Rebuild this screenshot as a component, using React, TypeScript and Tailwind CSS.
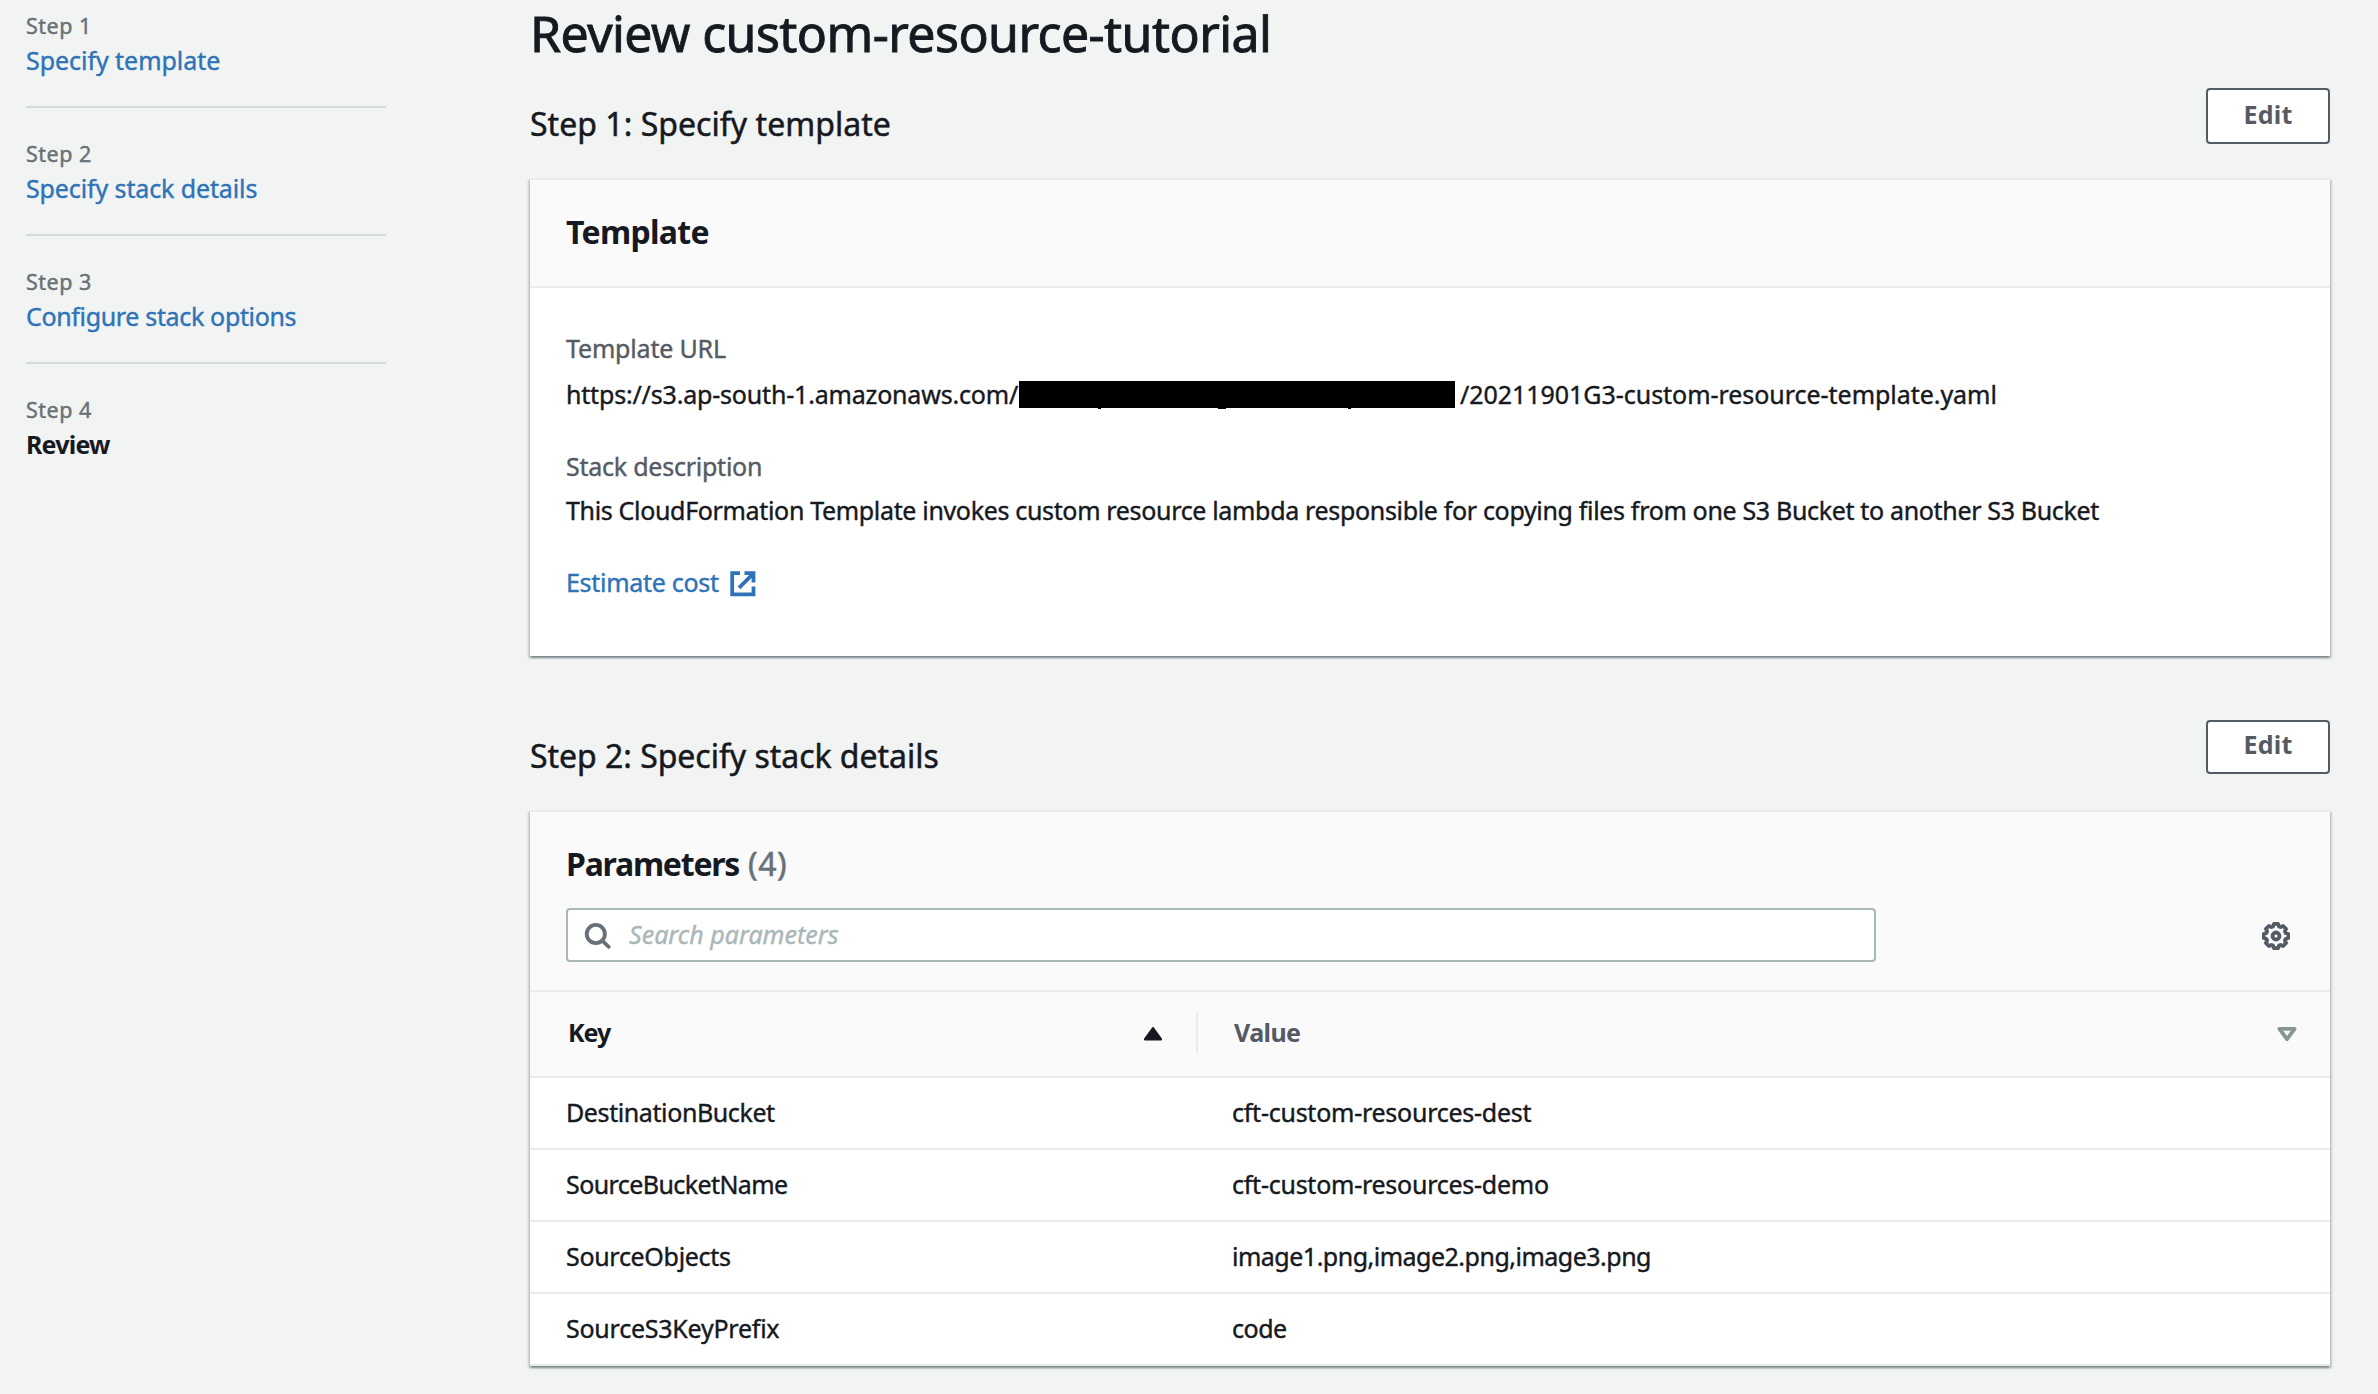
import type { ReactNode } from "react";

const steps = [
  { label: "Step 1", title: "Specify template", tracking: "tracking-[-0.05px]" },
  { label: "Step 2", title: "Specify stack details", tracking: "tracking-[-0.12px]" },
  { label: "Step 3", title: "Configure stack options", tracking: "tracking-[-0.34px]" },
  { label: "Step 4", title: "Review", tracking: "tracking-[-0.8px]", current: true },
];

const parameters = [
  { key: "DestinationBucket", value: "cft-custom-resources-dest", k: "tracking-[-0.4px]", v: "tracking-[-0.25px]" },
  { key: "SourceBucketName", value: "cft-custom-resources-demo", k: "tracking-[-0.58px]", v: "tracking-[-0.25px]" },
  { key: "SourceObjects", value: "image1.png,image2.png,image3.png", k: "tracking-[-0.31px]", v: "tracking-[-0.5px]" },
  { key: "SourceS3KeyPrefix", value: "code", k: "tracking-[-0.24px]", v: "tracking-[-0.5px]" },
];

function StepNav() {
  return (
    <nav className="ml-[26px] mt-[10px] w-[360px] shrink-0">
      {steps.map((s) => (
        <div key={s.label} className="mb-[30px] border-b-2 border-[#d5dbdb] pb-[28px] last:border-0">
          <div className="text-[21.5px] leading-[32px] tracking-[0.5px] text-[#687078]">{s.label}</div>
          <div
            className={`leading-[36px] ${s.tracking} ${s.current ? "font-bold text-[#16191f] [-webkit-text-stroke:0px]" : "text-[#2e73b8]"}`}
          >
            {s.title}
          </div>
        </div>
      ))}
    </nav>
  );
}

function SectionHeader({ children, short }: { children: ReactNode; short?: boolean }) {
  return (
    <div className="mb-[34px] flex h-[56px] items-start justify-between">
      {children}
      <button
        className={`w-[124px] rounded-[4px] border-2 border-[#545b64] bg-white text-center font-bold tracking-[0.17px] text-[#545b64] [-webkit-text-stroke:0px] ${short ? "h-[54px] pb-[5px]" : "h-[56px] pb-[3px]"}`}
      >
        Edit
      </button>
    </div>
  );
}

function Card({ children }: { children: ReactNode }) {
  return (
    <section className="border-t-2 border-[#eaebeb] bg-white shadow-[0_2px_2px_0_rgba(0,28,36,0.3),2px_2px_2px_0_rgba(0,28,36,0.15),-2px_2px_2px_0_rgba(0,28,36,0.15)]">
      {children}
    </section>
  );
}

function ExternalIcon() {
  return (
    <svg className="ml-[11px] mt-[3px] h-[26px] w-[26px]" viewBox="0 0 26 26" fill="none" stroke="currentColor" strokeWidth="3.8">
      <path d="M10 2.2H2.2V23.3H23.5V15.5M14.5 2.2H23.5V11.5M23 2.9L9 16.8" />
    </svg>
  );
}

function SearchIcon() {
  return (
    <svg className="ml-[16px] mt-[2px] h-[28px] w-[28px] text-[#687078]" viewBox="0 0 28 28" fill="none" stroke="currentColor" strokeWidth="3.8">
      <circle cx="11.8" cy="12" r="9.1" />
      <path d="M18 18.3L25.8 26" />
    </svg>
  );
}

function GearIcon() {
  return (
    <svg
      className="mt-[2px] h-[28px] w-[28px] text-[#545b64]"
      viewBox="0 0 28 28"
      fill="none"
      stroke="currentColor"
      strokeWidth="3.8"
      strokeLinejoin="round"
    >
      <path d="M12.1 1.8h3.8l1 2.6 1.7.7 2.5-1.1 2.9 2.9-1.1 2.5.7 1.7 2.6 1v3.8l-2.6 1-.7 1.7 1.1 2.5-2.9 2.9-2.5-1.1-1.7.7-1 2.6h-3.8l-1-2.6-1.7-.7-2.5 1.1L4 21.1l1.1-2.5-.7-1.7-2.6-1v-3.8l2.6-1 .7-1.7L4 6.9 6.9 4l2.5 1.1 1.700-.7z" />
      <circle cx="14" cy="14" r="3.5" />
    </svg>
  );
}

export default function App() {
  return (
    <div className="flex h-[1394px] w-full overflow-hidden bg-[#f2f4f3] font-['Noto_Sans','Open_Sans',sans-serif] text-[25px] whitespace-nowrap text-[#16191f] [-webkit-text-stroke:0.4px]">
      <StepNav />
      <main className="ml-[144px] mt-[3px] w-[1800px] shrink-0">
        <h1 className="mb-[25px] text-[50px] leading-[60px] tracking-[-0.56px] [-webkit-text-stroke:0.9px]">
          Review custom-resource-tutorial
        </h1>

        <SectionHeader>
          <h2 className="self-end text-[32px] leading-[40px] tracking-[0.04px] [-webkit-text-stroke:0.5px]">Step 1: Specify template</h2>
        </SectionHeader>
        <Card>
          <div className="h-[108px] border-b-2 border-[#eaebeb] bg-[#fafafa] px-[36px] pt-[32px]">
            <h3 className="text-[32px] font-bold leading-[40px] tracking-[-0.69px] [-webkit-text-stroke:0px]">Template</h3>
          </div>
          <div className="h-[368px] px-[36px] pt-[40px] leading-[40px]">
            <div className="tracking-[-0.18px] text-[#545b64]">Template URL</div>
            <div className="mt-[6px] flex">
              <span className="w-[452.5px] tracking-[-0.18px]">https://s3.ap-south-1.amazonaws.com/</span>
              <span className="relative mr-[5px] mt-[7px] h-[27px] w-[436.5px] bg-black">
                <span className="absolute left-[79px] top-[27px] h-px w-[3px] bg-black" />
                <span className="absolute left-[199px] top-[27px] h-px w-[8px] bg-black" />
                <span className="absolute left-[329px] top-[27px] h-px w-[3px] bg-black" />
              </span>
              <span className="tracking-[-0.04px]">/20211901G3-custom-resource-template.yaml</span>
            </div>
            <div className="mt-[32px] tracking-[-0.24px] text-[#545b64]">Stack description</div>
            <div className="mt-[4px] tracking-[-0.334px]">
              This CloudFormation Template invokes custom resource lambda responsible for copying files from one S3 Bucket to another S3 Bucket
            </div>
            <a className="mt-[32px] flex h-[40px] items-center tracking-[-0.3px] text-[#2e73b8]">
              Estimate cost
              <ExternalIcon />
            </a>
          </div>
        </Card>

        <div className="h-[64px]" />
        <SectionHeader short>
          <h2 className="self-end text-[32px] leading-[40px] tracking-[-0.03px] [-webkit-text-stroke:0.5px]">Step 2: Specify stack details</h2>
        </SectionHeader>
        <Card>
          <div className="h-[180px] border-b-2 border-[#eaebeb] bg-[#fafafa] px-[36px] pt-[32px]">
            <h3 className="flex text-[32px] font-bold leading-[40px] tracking-[-1.24px] [-webkit-text-stroke:0px]">
              <span className="w-[182px]">Parameters</span>
              <span className="font-normal tracking-[0.6px] text-[#687078] [-webkit-text-stroke:0.5px]">(4)</span>
            </h3>
            <div className="mt-[24px] flex items-center justify-between">
              <div className="flex h-[54px] w-[1310px] items-center rounded-[4px] border-2 border-[#aab7b8] bg-white">
                <SearchIcon />
                <span className="ml-[17px] italic tracking-[0.02px] text-[#aab7b8]">Search parameters</span>
              </div>
              <div className="mr-[4px]">
                <GearIcon />
              </div>
            </div>
          </div>
          <div className="flex h-[86px] border-b-2 border-[#eaebeb] bg-[#fafafa] font-bold leading-[81px] [-webkit-text-stroke:0px]">
            <div className="flex w-[666px] justify-between pl-[38px] pr-[33px]">
              <span className="tracking-[-1px]">Key</span>
              <svg className="mt-[34px] h-[15px] w-[20px]" viewBox="0 0 20 15">
                <path d="M10 2.4L17.8 13.2H2.2Z" fill="#16191f" stroke="#16191f" strokeWidth="2.6" strokeLinejoin="round" />
              </svg>
            </div>
            <div className="mt-[20px] h-[42px] w-[2px] bg-[#eaebeb]" />
            <div className="flex flex-1 justify-between pl-[36px] pr-[33px] text-[#545b64]">
              <span className="tracking-[-0.6px]">Value</span>
              <svg className="mt-[34px] h-[16px] w-[20px]" viewBox="0 0 20 16">
                <path d="M2.4 2.8H17.6L10 13.2Z" fill="none" stroke="#879596" strokeWidth="3.8" strokeLinejoin="round" />
              </svg>
            </div>
          </div>
          {parameters.map((p) => (
            <div key={p.key} className="flex h-[72px] border-b-2 border-[#eaebeb] leading-[69px]">
              <span className={`w-[702px] pl-[36px] ${p.k}`}>{p.key}</span>
              <span className={p.v}>{p.value}</span>
            </div>
          ))}
        </Card>
      </main>
    </div>
  );
}
